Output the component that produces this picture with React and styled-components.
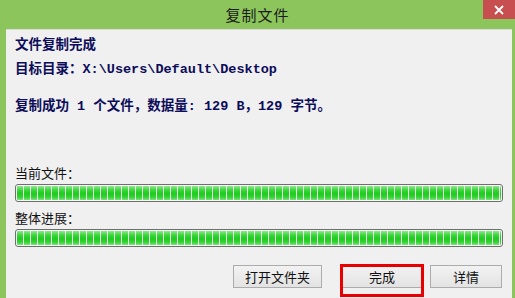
import React from 'react';
import styled, { createGlobalStyle } from 'styled-components';

const GlobalStyle = createGlobalStyle`
    html, body {
        margin: 0;
        padding: 0;
        background: #8bc55b;
    }
`;

const Window = styled.div`
    width: 515px;
    height: 298px;
    display: flex;
    flex-direction: column;
    background: #8bc55b;
    overflow: hidden;
`;

const TitleBar = styled.div`
    position: relative;
    height: 29px;
    flex: none;
    display: flex;
    align-items: center;
    justify-content: center;
    font-family: "Noto Sans CJK SC", sans-serif;
    font-size: 15px;
    color: #1c1c1c;
    letter-spacing: 1px;
`;

const CloseButton = styled.div`
    position: absolute;
    top: 0;
    right: 0;
    width: 32px;
    height: 19px;
    background: #c74f4f;
    display: flex;
    align-items: center;
    justify-content: center;
`;

const Panel = styled.div`
    flex: 1;
    margin: 0 3px 0 6px;
    background: #f0f0f0;
    border-top: 1px solid #d9d9d9;
    padding: 4px 9px 0 9px;
    display: flex;
    flex-direction: column;
`;

const InfoLine = styled.div`
    font-family: "Liberation Mono", "Noto Sans CJK SC", monospace;
    font-weight: bold;
    font-size: 13.5px;
    line-height: 16px;
    color: #0c0c5a;
    margin-top: ${(p) => p.gap || 0}px;
    white-space: nowrap;
`;

const Label = styled.div`
    font-family: "Noto Sans CJK SC", sans-serif;
    font-size: 13px;
    line-height: 16px;
    color: #111;
    margin-top: ${(p) => p.gap || 0}px;
`;

const Bar = styled.div`
    height: 18px;
    box-sizing: border-box;
    border: 1px solid #6e6e6e;
    border-radius: 3px;
    background: #fafafa;
    padding: 1px;
    margin-top: 3px;
`;

const Fill = styled.div`
    height: 100%;
    border-radius: 1px;
    background:
        repeating-linear-gradient(to right, transparent 0 6px, #e8f5e8 6px 7px),
        linear-gradient(to bottom, #8fe68f 0%, #3ad63a 30%, #1fcb1f 55%, #35d435 80%, #7ee07e 100%);
`;

const ButtonRow = styled.div`
    display: flex;
    justify-content: flex-end;
    align-items: flex-start;
    margin-top: 18px;
    margin-right: 1px;
`;

const Button = styled.div`
    position: relative;
    width: ${(p) => p.width}px;
    height: 23px;
    box-sizing: border-box;
    border: 1px solid #acacac;
    background: linear-gradient(to bottom, #f2f2f2, #e3e3e3);
    display: flex;
    align-items: center;
    justify-content: center;
    font-family: "Noto Sans CJK SC", sans-serif;
    font-size: 13px;
    color: #111;
    margin-left: ${(p) => p.gap || 0}px;

    &.marked::after {
        content: '';
        position: absolute;
        top: -2px;
        left: -3px;
        right: -3px;
        bottom: -10px;
        border: 3px solid #e80000;
    }
`;

const App = () => (
    <>
        <GlobalStyle />
        <Window>
            <TitleBar>
                复制文件
                <CloseButton>
                    <svg width="10" height="10" viewBox="0 0 10 10">
                        <path d="M1 1L9 9M9 1L1 9" stroke="#fff" strokeWidth="1.8" />
                    </svg>
                </CloseButton>
            </TitleBar>
            <Panel>
                <InfoLine gap={4}>文件复制完成</InfoLine>
                <InfoLine gap={8}>目标目录：X:\Users\Default\Desktop</InfoLine>
                <InfoLine gap={21}>复制成功 1 个文件，数据量: 129 B，129 字节。</InfoLine>
                <Label gap={50}>当前文件：</Label>
                <Bar><Fill /></Bar>
                <Label gap={8}>整体进展：</Label>
                <Bar><Fill /></Bar>
                <ButtonRow>
                    <Button width={89}>打开文件夹</Button>
                    <Button width={80} gap={20} className="marked">完成</Button>
                    <Button width={72} gap={8}>详情</Button>
                </ButtonRow>
            </Panel>
        </Window>
    </>
);

export default App;
